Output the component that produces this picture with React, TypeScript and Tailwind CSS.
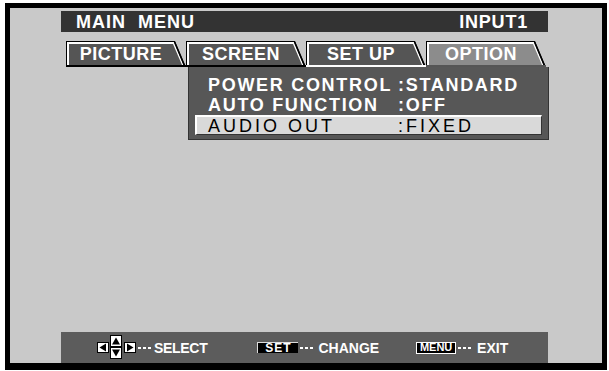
const font = "font-['Liberation_Sans',Arial,sans-serif]"

function Tab({ label, active, underline }: { label: string; active?: boolean; underline?: string }) {
  return (
    <div className="relative flex h-[26px] w-[120px] items-center">
      <svg className="absolute inset-0" width="120" height="26" viewBox="0 0 120 26">
        <polygon points="0,0 109,0 120,26 0,26" fill="#000" />
        <polygon points="1,1 108,1 118,25 1,25" fill="#fff" />
        <polygon points="3,3 107,3 116,24 3,24" fill={active ? '#8c8c8c' : '#555'} />
        <line x1="108.5" y1="1" x2="119" y2="26" stroke="#000" strokeWidth="1.5" />
        <rect x="0" y="24" width="120" height="2" fill={underline ?? '#000'} />
      </svg>
      <span className="relative w-[110px] pb-[1px] text-center text-[18px] font-bold leading-none tracking-[0.5px] text-white">
        {label}
      </span>
    </div>
  )
}

function Row({ label, value, selected }: { label: string; value: string; selected?: boolean }) {
  if (selected) {
    return (
      <div className="mx-[6px] flex h-[20px] items-center border-t-2 border-l-2 border-white border-b border-r border-b-[#333] border-r-[#333] bg-[#d9d9d9] pl-[11px] text-[18px] leading-none tracking-[3px] text-black">
        <span className="w-[190px]">{label}</span>
        <span>:{value}</span>
      </div>
    )
  }
  return (
    <div className="flex h-[20px] items-center pl-[19px] text-[18px] font-bold leading-none tracking-[1.7px] text-white">
      <span className="w-[190px]">{label}</span>
      <span>:{value}</span>
    </div>
  )
}

function Arrows() {
  return (
    <svg width="39" height="25" viewBox="0 0 39 25">
      <rect x="0.5" y="7.5" width="11" height="10" fill="#fff" stroke="#000" />
      <polygon points="2.5,12.5 9,8.5 9,16.5" fill="#000" />
      <rect x="13.5" y="0.5" width="11" height="11" fill="#fff" stroke="#000" />
      <polygon points="19,2.5 23,9.5 15,9.5" fill="#000" />
      <rect x="13.5" y="12.5" width="11" height="11" fill="#fff" stroke="#000" />
      <polygon points="19,21.5 23,14.5 15,14.5" fill="#000" />
      <rect x="27.5" y="7.5" width="11" height="10" fill="#fff" stroke="#000" />
      <polygon points="36.5,12.5 30,8.5 30,16.5" fill="#000" />
    </svg>
  )
}

function Dots() {
  return (
    <span className="mx-[2px] flex gap-[2px]">
      <span className="h-[2px] w-[3px] bg-white" />
      <span className="h-[2px] w-[3px] bg-white" />
      <span className="h-[2px] w-[3px] bg-white" />
    </span>
  )
}

export default function App() {
  return (
    <div className={`${font} h-[371px] w-[609px] bg-white pl-[5px] pt-[3px]`}>
      <div className="flex h-[367px] w-[602px] flex-col border-[5px] border-b-[7px] border-black bg-[#c9c9c9] px-[51px] pt-[3px]">
        <div className="mr-[3px] flex h-[21px] items-center justify-between bg-[#333] pl-[15px] pr-[20px] text-[18px] font-bold leading-none text-white">
          <span className="tracking-[1px]">MAIN&nbsp; MENU</span>
          <span className="tracking-[0.8px]">INPUT1</span>
        </div>

        <div className="ml-[5px] mt-[9px] flex">
          <Tab label="PICTURE" />
          <Tab label="SCREEN" />
          <Tab label="SET UP" underline="#fff" />
          <Tab label="OPTION" active underline="#555" />
        </div>

        <div className="ml-[127px] flex h-[73px] w-[361px] flex-col border border-t-0 border-[#333] bg-[#575757] pt-[8px]">
          <Row label="POWER CONTROL" value="STANDARD" />
          <Row label="AUTO FUNCTION" value="OFF" />
          <Row label="AUDIO OUT" value="FIXED" selected />
        </div>

        <div className="mr-[3px] mt-auto flex h-[31px] items-center bg-[#5c5c5c] pl-[36px] text-[14px] font-bold leading-none text-white">
          <Arrows />
          <Dots />
          <span className="ml-[1px] tracking-[-0.3px]">SELECT</span>
          <span className="ml-[50px] flex h-[11px] w-[41px] items-center justify-center border-l border-t border-[#ddd] bg-black text-[12px] tracking-[1px]">
            SET
          </span>
          <Dots />
          <span className="ml-[3px]">CHANGE</span>
          <span className="ml-[37px] flex h-[12px] w-[40px] items-center justify-center border border-white bg-black text-[11px]">
            MENU
          </span>
          <Dots />
          <span className="ml-[4px]">EXIT</span>
        </div>
      </div>
    </div>
  )
}
